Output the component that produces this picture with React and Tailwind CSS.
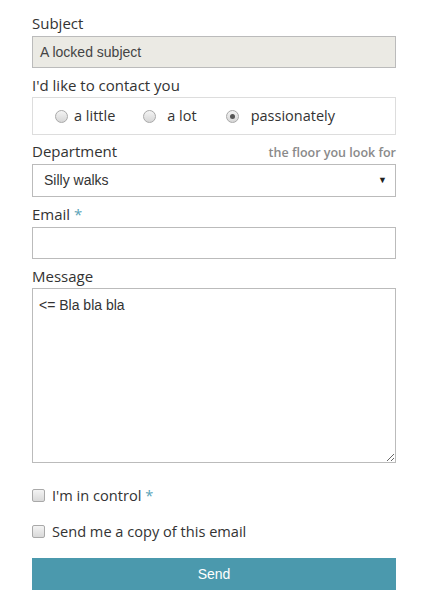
function Radio({ checked }) {
  return (
    <span className="flex h-[13px] w-[13px] items-center justify-center rounded-full border border-[#a9a9a9] bg-gradient-to-b from-[#f4f4f4] to-[#d6d6d6]">
      {checked && <span className="h-[5px] w-[5px] rounded-full bg-[#555]" />}
    </span>
  );
}

function Checkbox() {
  return (
    <span className="block h-[13px] w-[13px] rounded-[2px] border border-[#a9a9a9] bg-gradient-to-b from-[#f4f4f4] to-[#d9d9d9]" />
  );
}

function Label({ children, star }) {
  return (
    <div className="h-5 text-[15px] leading-[19px] text-[#333]">
      {children}
      {star && <span className="text-[#5aa3b8]"> *</span>}
    </div>
  );
}

export default function App() {
  const sans = { fontFamily: '"Open Sans", sans-serif' };
  return (
    <div className="min-h-[612px] bg-white px-8 pt-[14px]" style={sans}>
      <div className="flex w-[364px] flex-col">
        <Label>Subject</Label>
        <div className="mt-[2px] flex h-8 items-center border border-[#bbbbbb] bg-[#ebeae4] px-[7px] font-['Liberation_Sans',Arial,sans-serif] text-[14px] text-[#444]">
          A locked subject
        </div>

        <div className="mt-2">
          <Label>I'd like to contact you</Label>
        </div>
        <div className="mt-px flex h-[38px] items-center border border-[#dddddd] pl-[22px] text-[14.5px] text-[#333]">
          <div className="flex items-center gap-[6px]">
            <Radio />
            <span>a little</span>
          </div>
          <div className="ml-[28px] flex items-center gap-[11px]">
            <Radio />
            <span>a lot</span>
          </div>
          <div className="ml-[29px] flex items-center gap-[12px]">
            <Radio checked />
            <span>passionately</span>
          </div>
        </div>

        <div className="mt-[7px] flex h-5 items-baseline justify-between">
          <span className="text-[15px] leading-[19px] text-[#333]">Department</span>
          <span className="text-[12.5px] font-semibold text-[#8a8a8a]">the floor you look for</span>
        </div>
        <div className="mt-[2px] flex h-[33px] items-center justify-between border border-[#bbbbbb] pl-[11px] pr-[8px] font-['Liberation_Sans',Arial,sans-serif] text-[14px] text-[#333]">
          <span>Silly walks</span>
          <span className="text-[9px] text-[#222]">▼</span>
        </div>

        <div className="mt-2">
          <Label star>Email</Label>
        </div>
        <div className="mt-[2px] h-8 border border-[#bbbbbb]" />

        <div className="mt-2">
          <Label>Message</Label>
        </div>
        <textarea
          defaultValue="<= Bla bla bla"
          className="mt-px h-[175px] w-full resize-y border border-[#bbbbbb] px-[6px] py-[7px] font-['Liberation_Sans',Arial,sans-serif] text-[14px] leading-[18px] text-[#333] outline-none"
        />

        <div className="mt-[22px] flex items-center gap-[7px] text-[14.6px] text-[#333]">
          <Checkbox />
          <span className="leading-5">
            I'm in control<span className="text-[#5aa3b8]"> *</span>
          </span>
        </div>
        <div className="mt-[16px] flex items-center gap-[7px] text-[14.6px] text-[#333]">
          <Checkbox />
          <span className="leading-5">Send me a copy of this email</span>
        </div>

        <button
          type="button"
          className="mt-[17px] flex h-8 items-center justify-center bg-[#4b99ad] font-['Liberation_Sans',Arial,sans-serif] text-[14px] text-white"
        >
          Send
        </button>
      </div>
    </div>
  );
}
